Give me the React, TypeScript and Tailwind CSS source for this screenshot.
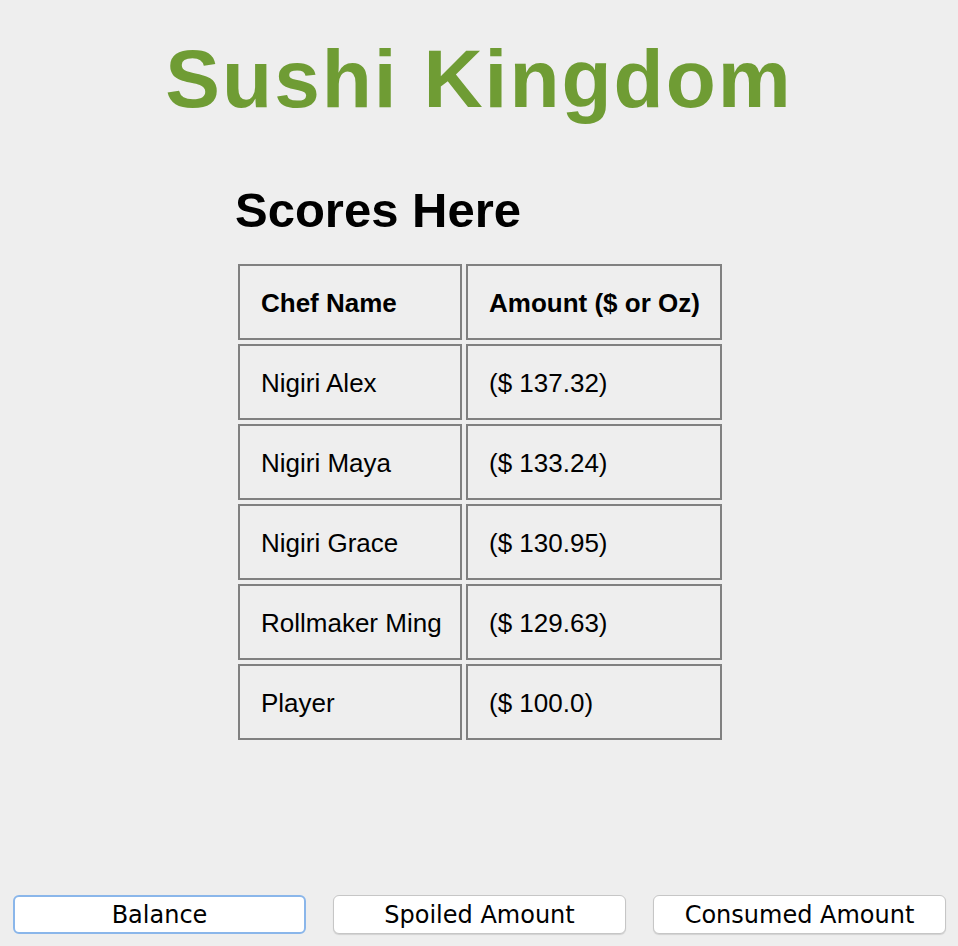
import React from 'react';

const rows = [
  { name: 'Nigiri Alex', amount: '($ 137.32)' },
  { name: 'Nigiri Maya', amount: '($ 133.24)' },
  { name: 'Nigiri Grace', amount: '($ 130.95)' },
  { name: 'Rollmaker Ming', amount: '($ 129.63)' },
  { name: 'Player', amount: '($ 100.0)' },
];

const cell =
  'h-[76px] border-2 border-[#808080] flex items-center pl-[21px] pt-[2px] text-[26px] text-black';

export default function App() {
  return (
    <div className="h-screen bg-[#eeeeee] flex flex-col font-['Liberation_Sans',Arial,sans-serif]">
      {/* Title */}
      <h1 className="mt-[38px] text-center text-[82px] leading-none font-bold text-[#6f9c34] tracking-[2px]">
        Sushi Kingdom
      </h1>

      {/* Scores */}
      <div className="mx-auto w-[486px] pl-[2px] mt-[66px]">
        <h2 className="text-[49px] leading-none font-bold text-black font-['Comic_Sans_MS','Liberation_Sans',sans-serif] -ml-[3px]">
          Scores Here
        </h2>
        <div className="mt-[29px] grid grid-cols-[224px_256px] gap-[4px]">
          <div className={`${cell} font-bold`}>Chef Name</div>
          <div className={`${cell} font-bold`}>Amount ($ or Oz)</div>
          {rows.map((r) => (
            <React.Fragment key={r.name}>
              <div className={cell}>{r.name}</div>
              <div className={cell}>{r.amount}</div>
            </React.Fragment>
          ))}
        </div>
      </div>

      {/* Bottom buttons */}
      <div className="mt-auto grid grid-cols-3 gap-[27px] pl-[13px] pr-[12px] pb-[12px] font-['DejaVu_Sans',sans-serif] text-[24px] text-black">
        <button className="h-[39px] bg-white rounded-[6px] border-2 border-[#8ab6ea] leading-none">
          Balance
        </button>
        <button className="h-[39px] bg-white rounded-[6px] border border-[#c6c6c6] shadow-[0_1px_1px_rgba(0,0,0,0.12)] leading-none">
          Spoiled Amount
        </button>
        <button className="h-[39px] bg-white rounded-[6px] border border-[#c6c6c6] shadow-[0_1px_1px_rgba(0,0,0,0.12)] leading-none">
          Consumed Amount
        </button>
      </div>
    </div>
  );
}
